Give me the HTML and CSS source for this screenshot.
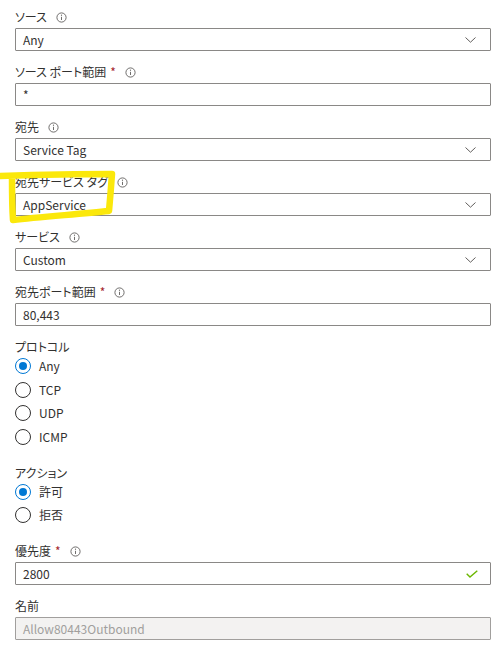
FILE: index.html
```html
<!DOCTYPE html>
<html lang="ja">
<head>
<meta charset="utf-8">
<title>受信セキュリティ規則</title>
<link rel="stylesheet" href="styles.css">
</head>
<body>
<div class="form">
  <div class="field">
    <div class="label">ソース<svg class="info" viewBox="0 0 11 11"><circle cx="5.5" cy="5.5" r="4.6"/><line x1="5.5" y1="4.8" x2="5.5" y2="8"/><circle class="dot" cx="5.5" cy="3.2" r="0.6"/></svg></div>
    <div class="box select">Any<svg class="chev" viewBox="0 0 11 6"><polyline points="0.5,0.5 5.5,5.2 10.5,0.5"/></svg></div>
  </div>
  <div class="field">
    <div class="label">ソース ポート範囲<span class="req">*</span><svg class="info" viewBox="0 0 11 11"><circle cx="5.5" cy="5.5" r="4.6"/><line x1="5.5" y1="4.8" x2="5.5" y2="8"/><circle class="dot" cx="5.5" cy="3.2" r="0.6"/></svg></div>
    <div class="box">*</div>
  </div>
  <div class="field">
    <div class="label">宛先<svg class="info" viewBox="0 0 11 11"><circle cx="5.5" cy="5.5" r="4.6"/><line x1="5.5" y1="4.8" x2="5.5" y2="8"/><circle class="dot" cx="5.5" cy="3.2" r="0.6"/></svg></div>
    <div class="box select">Service Tag<svg class="chev" viewBox="0 0 11 6"><polyline points="0.5,0.5 5.5,5.2 10.5,0.5"/></svg></div>
  </div>
  <div class="field">
    <div class="label">宛先サービス タグ<svg class="info" viewBox="0 0 11 11"><circle cx="5.5" cy="5.5" r="4.6"/><line x1="5.5" y1="4.8" x2="5.5" y2="8"/><circle class="dot" cx="5.5" cy="3.2" r="0.6"/></svg></div>
    <div class="box select">AppService<svg class="chev" viewBox="0 0 11 6"><polyline points="0.5,0.5 5.5,5.2 10.5,0.5"/></svg></div>
  </div>
  <div class="field">
    <div class="label">サービス<svg class="info" viewBox="0 0 11 11"><circle cx="5.5" cy="5.5" r="4.6"/><line x1="5.5" y1="4.8" x2="5.5" y2="8"/><circle class="dot" cx="5.5" cy="3.2" r="0.6"/></svg></div>
    <div class="box select">Custom<svg class="chev" viewBox="0 0 11 6"><polyline points="0.5,0.5 5.5,5.2 10.5,0.5"/></svg></div>
  </div>
  <div class="field">
    <div class="label">宛先ポート範囲<span class="req">*</span><svg class="info" viewBox="0 0 11 11"><circle cx="5.5" cy="5.5" r="4.6"/><line x1="5.5" y1="4.8" x2="5.5" y2="8"/><circle class="dot" cx="5.5" cy="3.2" r="0.6"/></svg></div>
    <div class="box">80,443</div>
  </div>
  <div class="group">
    <div class="label">プロトコル</div>
    <div class="radios">
      <div class="radio checked"><span class="circle"></span>Any</div>
      <div class="radio"><span class="circle"></span>TCP</div>
      <div class="radio"><span class="circle"></span>UDP</div>
      <div class="radio"><span class="circle"></span>ICMP</div>
    </div>
  </div>
  <div class="group">
    <div class="label">アクション</div>
    <div class="radios">
      <div class="radio checked"><span class="circle"></span>許可</div>
      <div class="radio"><span class="circle"></span>拒否</div>
    </div>
  </div>
  <div class="field">
    <div class="label">優先度<span class="req">*</span><svg class="info" viewBox="0 0 11 11"><circle cx="5.5" cy="5.5" r="4.6"/><line x1="5.5" y1="4.8" x2="5.5" y2="8"/><circle class="dot" cx="5.5" cy="3.2" r="0.6"/></svg></div>
    <div class="box valid">2800<svg class="check" viewBox="0 0 12 8"><polyline points="0.7,3.8 4,7 11.3,0.7"/></svg></div>
  </div>
  <div class="field">
    <div class="label">名前</div>
    <div class="box disabled">Allow80443Outbound</div>
  </div>
  <svg class="marker" viewBox="0 0 500 649"><path d="M-4 176 C 30 175, 80 174, 112 174 C 111 188, 110 200, 109 211 C 80 214, 40 217, 13 220 C 12 206, 12 192, 12 178"/></svg>
</div>
</body>
</html>
```
FILE: styles.css
```css
* { box-sizing: border-box; }
html, body { margin: 0; padding: 0; background: #fff; }
body {
  font-family: "Noto Sans CJK JP", "Noto Sans", sans-serif;
  font-size: 12px;
  color: #323130;
  font-feature-settings: "palt";
}
.form {
  position: relative;
  width: 500px;
  height: 649px;
  padding: 6px 10px 0 15px;
  overflow: hidden;
}
.field { margin-bottom: 10px; }
.label {
  height: 22px;
  line-height: 22px;
  display: flex;
  align-items: center;
  white-space: pre;
}
.req { color: #a4262c; margin-left: 4px; }
.info {
  width: 11px;
  height: 11px;
  margin-left: 9px;
  fill: none;
  stroke: #605e5c;
  stroke-width: 0.9;
}
.info .dot { fill: #605e5c; stroke: none; }
.box {
  width: 476px;
  height: 23px;
  border: 1px solid #8a8886;
  border-radius: 1px;
  padding: 0 7px;
  display: flex;
  align-items: center;
  justify-content: space-between;
  background: #fff;
}
.chev {
  width: 11px;
  height: 6px;
  margin-right: 7px;
  fill: none;
  stroke: #605e5c;
  stroke-width: 1;
}
.check {
  width: 12px;
  height: 8px;
  margin-right: 5px;
  fill: none;
  stroke: #6bb700;
  stroke-width: 1.4;
}
.disabled {
  background: #f3f2f1;
  border-color: #a19f9d;
  color: #a19f9d;
}
.group { margin-bottom: 17px; }
.radios { display: flex; flex-direction: column; gap: 7.5px; }
.radio {
  height: 16px;
  display: flex;
  align-items: center;
  gap: 8px;
  line-height: 16px;
}
.circle {
  width: 16px;
  height: 16px;
  border: 1px solid #323130;
  border-radius: 50%;
  display: flex;
  align-items: center;
  justify-content: center;
  flex: none;
}
.checked .circle { border-color: #0078d4; }
.checked .circle::after {
  content: "";
  width: 8px;
  height: 8px;
  border-radius: 50%;
  background: #0078d4;
}
.marker {
  position: absolute;
  left: 0;
  top: 0;
  width: 500px;
  height: 649px;
  pointer-events: none;
  fill: none;
  stroke: #fbe80b;
  stroke-width: 6.5;
  stroke-linecap: round;
  stroke-linejoin: round;
}
```
